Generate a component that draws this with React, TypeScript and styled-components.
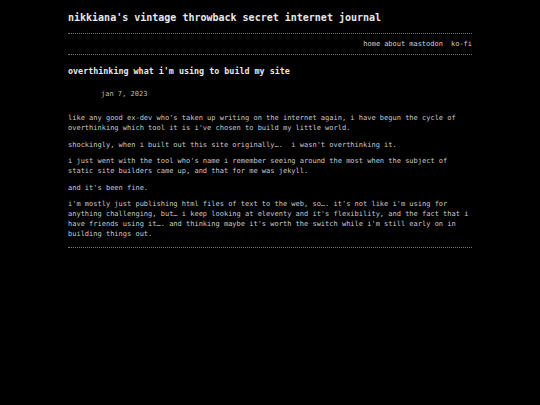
import styled, { createGlobalStyle } from "styled-components";

const GlobalStyle = createGlobalStyle`
  html, body {
    margin: 0;
    padding: 0;
    background: #000;
  }
  body {
    font-family: "DejaVu Sans Mono", "Liberation Mono", monospace;
    color: #cfcfcf;
    -webkit-font-smoothing: antialiased;
  }
`;

const Page = styled.div`
  width: 404px;
  margin: 0 auto;
  padding-top: 12px;
`;

const SiteTitle = styled.h1`
  margin: 0 0 9px;
  font-size: 10px;
  line-height: 12px;
  font-weight: bold;
  color: #e8e8e8;
`;

const Nav = styled.nav`
  display: flex;
  justify-content: flex-end;
  gap: 4px;
  padding: 5px 0;
  border-top: 1px dotted #777;
  border-bottom: 1px dotted #777;
  font-size: 7px;
  line-height: 10px;
`;

const NavLink = styled.a<{ $wide?: boolean }>`
  color: #d0d0d0;
  text-decoration: none;
  margin-left: ${(p) => (p.$wide ? "4px" : "0")};
`;

const Post = styled.article`
  padding-top: 11px;
  padding-bottom: 8px;
  border-bottom: 1px dotted #777;
`;

const PostTitle = styled.h2`
  margin: 0 0 13px;
  font-size: 8.4px;
  line-height: 10px;
  font-weight: bold;
  color: #e8e8e8;
`;

const PostDate = styled.div`
  margin: 0 0 14px 33px;
  font-size: 7px;
  line-height: 10px;
  color: #bdbdbd;
`;

const Para = styled.p`
  margin: 0 0 6.5px;
  font-size: 7px;
  line-height: 10px;
  color: #cacaca;
  &:last-child {
    margin-bottom: 0;
  }
`;

const links = ["home", "about", "mastodon"];

export default function App() {
  return (
    <>
      <GlobalStyle />
      <Page>
        <SiteTitle>nikkiana's vintage throwback secret internet journal</SiteTitle>
        <Nav>
          {links.map((l) => (
            <NavLink key={l} href="#">
              {l}
            </NavLink>
          ))}
          <NavLink href="#" $wide>
            ko-fi
          </NavLink>
        </Nav>
        <Post>
          <PostTitle>overthinking what i'm using to build my site</PostTitle>
          <PostDate>jan 7, 2023</PostDate>
          <Para>
            like any good ex-dev who's taken up writing on the internet again, i have begun the cycle of
            overthinking which tool it is i've chosen to build my little world.
          </Para>
          <Para>shockingly, when i built out this site originally….&nbsp; i wasn't overthinking it.</Para>
          <Para>
            i just went with the tool who's name i remember seeing around the most when the subject of
            static site builders came up, and that for me was jekyll.
          </Para>
          <Para>and it's been fine.</Para>
          <Para>
            i'm mostly just publishing html files of text to the web, so…. it's not like i'm using for
            anything challenging, but… i keep looking at eleventy and it's flexibility, and the fact that i
            have friends using it…. and thinking maybe it's worth the switch while i'm still early on in
            building things out.
          </Para>
        </Post>
      </Page>
    </>
  );
}
